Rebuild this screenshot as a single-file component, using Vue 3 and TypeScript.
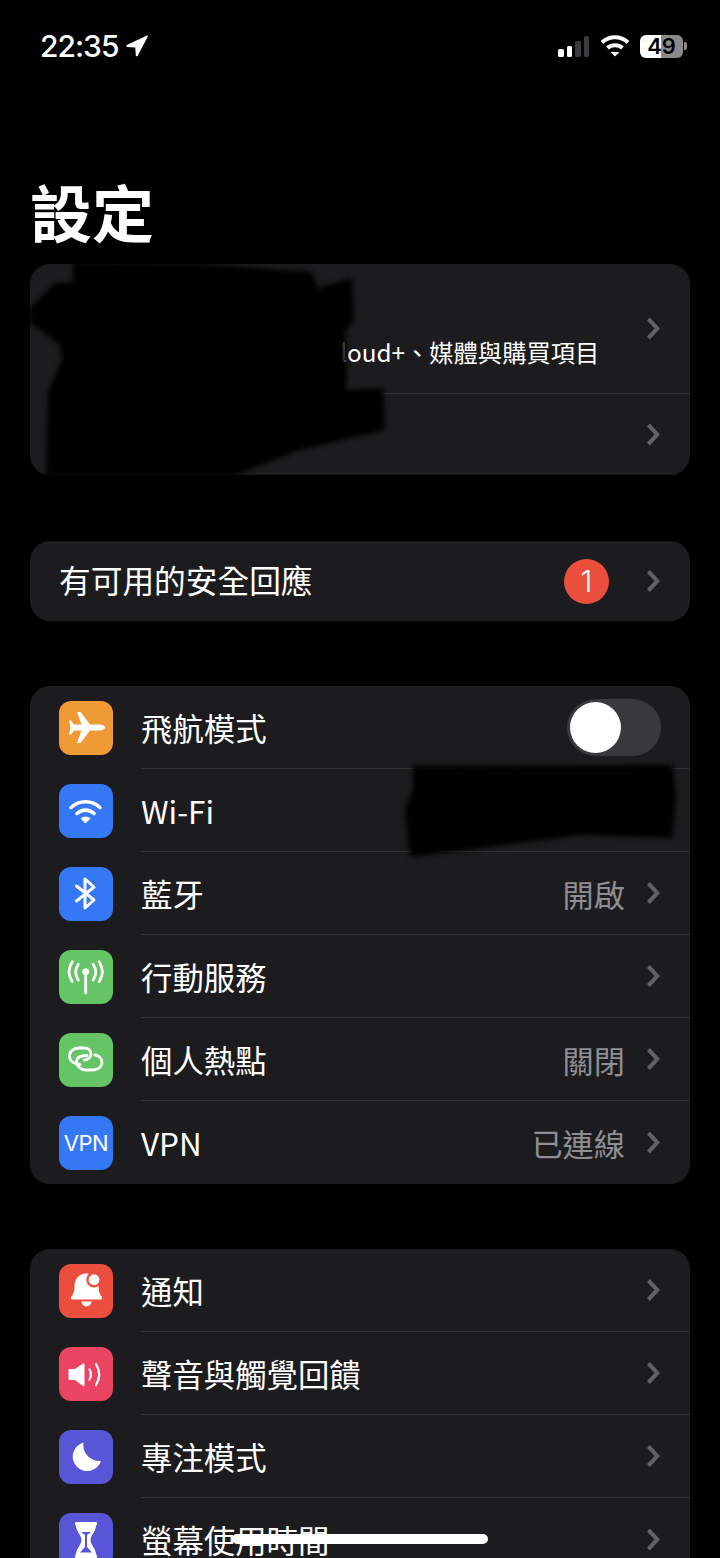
<script setup lang="ts">
interface Shape {
  d: string
  kind: "fill" | "stroke" | "cut"
  width?: number
}

interface Row {
  label: string
  icon: string
  tile: string
  value?: string
  toggle?: boolean
  noChevron?: boolean
  iconText?: string
}

const icons: Record<string, Shape[]> = {
  plane: [
    {
      kind: "fill",
      d: "M46 26.5c0-2-3-3-6-3h-9L21.5 11H18l4.5 12.5H15l-3-4h-2l1.5 7L10 33.5h2l3-4h7.5L18 42h3.5L31 29.5h9c3 0 6-1 6-3z"
    }
  ],
  wifi: [
    { kind: "stroke", width: 3.6, d: "M12 23.5a21 21 0 0 1 29 0" },
    { kind: "stroke", width: 3.6, d: "M18 29.5a12.5 12.5 0 0 1 17 0" },
    { kind: "fill", d: "M26.5 39.5l-5-5a7 7 0 0 1 10 0z" }
  ],
  bluetooth: [{ kind: "stroke", width: 3, d: "M17.5 19L35 33l-9 8V12l9 8-17.5 14" }],
  antenna: [
    { kind: "fill", d: "M26.700 18.200a3.500 3.500 0 0 1 1.400 6.700V43a1.400 1.400 0 0 1-2.800 0V24.900a3.500 3.500 0 0 1 1.400-6.700z" },
    { kind: "stroke", width: 2.8, d: "M19.300 14.300Q14 22.200 19.300 30M34.100 14.300Q39.400 22.200 34.100 30" },
    { kind: "stroke", width: 2.8, d: "M13.300 11.700Q6.700 21.700 13.300 31.700M40.100 11.700Q46.700 21.700 40.100 31.700" }
  ],
  chain: [
    { kind: "stroke", width: 2.8, d: "M21 31.500C15 31 10.500 28 10.500 23 10.500 18 15 15 20 15H25C29 15 32 17.500 32 21 32 24.500 28.500 26.500 25.500 27" },
    { kind: "stroke", width: 2.8, d: "M28 22.500C21 22.500 17.500 25 17.500 28.500 17.500 33 22 37 27 37H34C39 37 43 33.500 43 29.500 43 25.500 40 22.500 36 22" }
  ],
  bell: [
    {
      kind: "fill",
      d: "M27 9.500c-7 0-11.500 5.500-11.500 13 0 5-1.500 8.500-3.500 10.500-.5 1 0 2.500 1.500 2.500h28c1.500 0 2-1.500 1.500-2.500-2-2-3.500-5.500-3.500-10.500 0-7-4.500-13-12.500-13z"
    },
    { kind: "cut", d: "M35 8a7.700 7.700 0 1 1 0 15.400A7.700 7.700 0 0 1 35 8z" },
    { kind: "fill", d: "M35 10.300a5.400 5.400 0 1 1 0 10.800 5.400 5.400 0 0 1 0-10.800z" },
    { kind: "fill", d: "M22.500 37.500h10a5 5 0 0 1-10 0z" }
  ],
  speaker: [
    {
      kind: "fill",
      d: "M9.500 23a1 1 0 0 1 1-1h5.500l8-5.500a1 1 0 0 1 1.500 1V38a1 1 0 0 1-1.500 1l-8-6h-5.500a1 1 0 0 1-1-1z"
    },
    { kind: "stroke", width: 2.2, d: "M30.500 22.500q3 5 0 10" },
    { kind: "stroke", width: 2.2, d: "M37 17q6.500 10.500 0 21" }
  ],
  moon: [{ kind: "fill", d: "M24.500 12.500A14.500 14.500 0 1 0 42 31 16 16 0 0 1 24.500 12.500z" }],
  hourglass: [
    { kind: "fill", d: "M17 9h20a1 1 0 0 1 1 1v1.500a1 1 0 0 1-1 1H17a1 1 0 0 1-1-1V10a1 1 0 0 1 1-1z" },
    { kind: "fill", d: "M17 41.500h20a1 1 0 0 1 1 1V44a1 1 0 0 1-1 1H17a1 1 0 0 1-1-1v-1.500a1 1 0 0 1 1-1z" },
    { kind: "fill", d: "M17 12h20c0 7-5 9-5.500 15 .5 6 5.500 8 5.500 15H17c0-7 5-9 5.500-15-.5-6-5.500-8-5.500-15z" },
    { kind: "cut", d: "M22 19h10l-4 3h-2z" },
    { kind: "cut", d: "M26 22h2v12l5 5.500H21l5-5.500z" }
  ]
}

const network: Row[] = [
  { label: "飛航模式", icon: "plane", tile: "#f09a37", toggle: true, noChevron: true },
  { label: "Wi-Fi", icon: "wifi", tile: "#3478f6", noChevron: true },
  { label: "藍牙", icon: "bluetooth", tile: "#3478f6", value: "開啟" },
  { label: "行動服務", icon: "antenna", tile: "#65c466" },
  { label: "個人熱點", icon: "chain", tile: "#65c466", value: "關閉" },
  { label: "VPN", icon: "", iconText: "VPN", tile: "#3478f6", value: "已連線" }
]

const general: Row[] = [
  { label: "通知", icon: "bell", tile: "#eb4e3d" },
  { label: "聲音與觸覺回饋", icon: "speaker", tile: "#eb4462" },
  { label: "專注模式", icon: "moon", tile: "#5856d6" },
  { label: "螢幕使用時間", icon: "hourglass", tile: "#5856d6" }
]

const sections = [network, general]
</script>

<template>
  <div class="page">
    <div class="status">
      <div class="clock">
        <span>22:35</span>
        <svg class="arrow" width="22" height="22" viewBox="0 0 22 22">
          <path d="M21 .5L.8 10c-.8.5-.5 1.800.5 1.900l8 .5.5 8c.1 1 1.300 1.300 1.800.5L21.800 1.400c.3-.6-.2-1.100-.8-.9z" />
        </svg>
      </div>
      <div class="indicators">
        <div class="signal">
          <i class="on h1"></i>
          <i class="on h2"></i>
          <i class="h3"></i>
          <i class="h4"></i>
        </div>
        <svg class="wifi" width="30" height="22" viewBox="0 0 30 22">
          <path d="M2 7.500a19 19 0 0 1 26 0" />
          <path d="M7.500 13a11.500 11.500 0 0 1 15 0" />
          <polygon points="15,21.500 10.500,17 19.500,17" />
        </svg>
        <div class="battery"><span>49</span></div>
        <div class="nub"></div>
      </div>
    </div>

    <h1 class="title">設定</h1>

    <section class="group account">
      <div class="account-top">
        <span class="subtitle">Apple ID、iCloud+、媒體與購買項目</span>
        <span class="chevron"></span>
      </div>
      <div class="account-line"></div>
      <div class="account-bottom">
        <span class="chevron"></span>
      </div>
    </section>

    <section class="group alert">
      <span class="alert-label">有可用的安全回應</span>
      <span class="badge">1</span>
      <span class="chevron"></span>
    </section>

    <section v-for="(rows, i) in sections" :key="i" class="group">
      <div v-for="row in rows" :key="row.label" class="row">
        <div class="tile" :style="{ background: row.tile }">
          <span v-if="row.iconText" class="tile-text">{{ row.iconText }}</span>
          <svg v-else width="54" height="54" viewBox="0 0 54 54">
            <path
              v-for="(shape, n) in icons[row.icon]"
              :key="n"
              :d="shape.d"
              :fill="shape.kind === 'stroke' ? 'none' : shape.kind === 'cut' ? row.tile : '#fff'"
              :stroke="shape.kind === 'stroke' ? '#fff' : 'none'"
              :stroke-width="shape.width"
              stroke-linecap="round"
              stroke-linejoin="round"
            />
          </svg>
        </div>
        <div class="row-body">
          <span class="label">{{ row.label }}</span>
          <span v-if="row.value" class="value">{{ row.value }}</span>
          <div v-if="row.toggle" class="toggle"><div class="knob"></div></div>
          <span v-if="!row.noChevron" class="chevron"></span>
        </div>
      </div>
    </section>

    <!-- marker scribbles drawn over the private bits of the screenshot -->
    <svg class="scribble" width="720" height="1558" viewBox="0 0 720 1558">
      <path d="M73 262L200 264 312 272 318 288 352 278 354 320 345 332 347 380 345 390 383 388 385 430 300 450 230 477 46 477 48 392 62 360 60 345 30 322 30 308 55 283 73 282z" />
      <path d="M413 766L673 765 676 800 672 838 580 835 467 850 410 857 405 810 413 790z" />
    </svg>

    <div class="home-bar"></div>
  </div>
</template>

<style scoped>
.page {
  position: relative;
  width: 720px;
  height: 1558px;
  overflow: hidden;
  background: #000;
  color: #fff;
  font-family: "Noto Sans CJK TC", "Inter", sans-serif;
}

.status {
  display: flex;
  justify-content: space-between;
  align-items: center;
  height: 92px;
  padding: 0 33px 0 40px;
  box-sizing: border-box;
}

.clock {
  display: flex;
  align-items: center;
  gap: 8px;
  font-family: "Inter", sans-serif;
  font-size: 30px;
  font-weight: 500;
  letter-spacing: -1px;
  line-height: 1;
}

.arrow path {
  fill: #fff;
}

.indicators {
  display: flex;
  align-items: center;
}

.signal {
  display: flex;
  align-items: flex-end;
  gap: 3px;
  height: 21px;
  margin-right: 11px;
}

.signal i {
  display: block;
  width: 5.500px;
  border-radius: 1.500px;
  background: #3a3a3c;
}

.signal i.on {
  background: #fff;
}

.h1 {
  height: 8px;
}

.h2 {
  height: 11px;
}

.h3 {
  height: 16px;
}

.h4 {
  height: 21px;
}

.wifi {
  margin-right: 10px;
}

.wifi path {
  fill: none;
  stroke: #fff;
  stroke-width: 4;
}

.wifi polygon {
  fill: #fff;
}

.battery {
  width: 43px;
  height: 23px;
  border-radius: 6px;
  background: linear-gradient(90deg, #fff 0 49%, #8a8a8a 49% 100%);
  color: #000;
  font-family: "Inter", sans-serif;
  font-size: 22px;
  font-weight: 600;
  line-height: 23px;
  text-align: center;
}

.nub {
  width: 3px;
  height: 8px;
  margin-left: 1px;
  border-radius: 0 2px 2px 0;
  background: #8a8a8a;
}

.title {
  height: 172px;
  margin: 0;
  padding-left: 30px;
  font-size: 62px;
  font-weight: 700;
  line-height: 238px;
  box-sizing: border-box;
}

.group {
  width: 660px;
  margin: 0 0 65px 30px;
  border-radius: 20px;
  background: #1c1c1e;
  overflow: hidden;
}

.account {
  height: 211px;
  margin-bottom: 66px;
}

.account-top {
  position: relative;
  display: flex;
  justify-content: flex-end;
  align-items: center;
  height: 129px;
  padding-right: 30px;
  box-sizing: border-box;
}

.account-line {
  height: 1px;
  margin-left: 111px;
  background: #38383a;
}

.subtitle {
  position: absolute;
  top: 71px;
  left: 169px;
  font-size: 24.300px;
  line-height: 34px;
  white-space: nowrap;
}

.account-bottom {
  display: flex;
  justify-content: flex-end;
  align-items: center;
  height: 81px;
  padding-right: 30px;
  box-sizing: border-box;
}

.alert {
  display: flex;
  align-items: center;
  height: 80px;
  padding: 0 30px 0 29px;
  box-sizing: border-box;
}

.alert-label {
  flex: 1;
  padding-bottom: 4px;
  font-size: 31.700px;
}

.badge {
  width: 45px;
  height: 45px;
  margin-right: 38px;
  border-radius: 50%;
  background: #eb4e3d;
  font-family: "Inter", sans-serif;
  font-size: 30px;
  font-weight: 300;
  line-height: 45px;
  text-align: center;
}

.row {
  display: flex;
  align-items: center;
  height: 83px;
  padding-left: 29px;
}

.tile {
  display: flex;
  flex: none;
  justify-content: center;
  align-items: center;
  width: 54px;
  height: 54px;
  border-radius: 12px;
}

.tile-text {
  font-family: "Inter", sans-serif;
  font-size: 22px;
  letter-spacing: -0.5px;
}

.row-body {
  display: flex;
  flex: 1;
  align-items: center;
  align-self: stretch;
  margin-left: 28px;
  padding-right: 30px;
  border-bottom: 1px solid #343436;
}

.row:last-child .row-body {
  border-bottom: none;
}

.label {
  flex: 1;
  font-size: 31.400px;
  white-space: nowrap;
}

.value {
  margin-right: 22px;
  color: #8e8e93;
  font-size: 31.200px;
}

.chevron {
  display: block;
  flex: none;
  width: 13px;
  height: 22px;
  background: #626266;
  clip-path: polygon(0 14%, 22% 0, 100% 50%, 22% 100%, 0 86%, 58% 50%);
}

.toggle {
  width: 94px;
  height: 57px;
  margin-right: -1px;
  padding: 3px;
  border-radius: 29px;
  background: #39393d;
  box-sizing: border-box;
}

.knob {
  width: 51px;
  height: 51px;
  border-radius: 50%;
  background: #fff;
}

.scribble {
  position: absolute;
  top: 0;
  left: 0;
  pointer-events: none;
}

.scribble path {
  fill: #000;
  filter: blur(2.500px);
}

.home-bar {
  position: absolute;
  bottom: 14px;
  left: 232px;
  width: 256px;
  height: 10px;
  border-radius: 5px;
  background: #fff;
}
</style>
